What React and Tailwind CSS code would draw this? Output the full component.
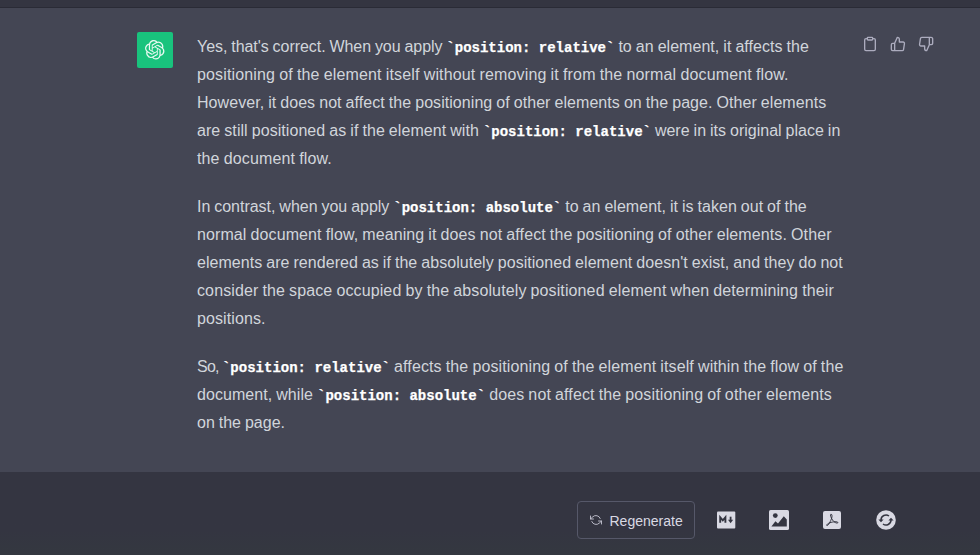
import React from "react";
import { FiClipboard, FiThumbsUp, FiThumbsDown, FiRefreshCcw } from "react-icons/fi";
import { SiOpenai } from "react-icons/si";

const Line = ({ children }) => <div className="whitespace-pre">{children}</div>;
const Code = ({ children }) => (
  <code className="font-['Liberation_Mono',monospace] text-sm font-bold text-white [word-spacing:0] [-webkit-text-stroke:0.25px_white]">{children}</code>
);

function MarkdownIcon() {
  return (
    <svg width="20" height="20" viewBox="0 0 20 20">
      <rect x="1" y="1.5" width="18.3" height="17" rx="1" fill="#d9d9e3" />
      <path d="M4.2 12.8V7.4L6.8 10.4L9.4 7.4V12.8" fill="none" stroke="#343541" strokeWidth="1.9" />
      <path d="M14.6 6.7V11" fill="none" stroke="#343541" strokeWidth="1.8" />
      <path d="M12 9.8H17.2L14.6 13.2Z" fill="#343541" />
    </svg>
  );
}

function ImageIcon() {
  return (
    <svg width="20" height="20" viewBox="0 0 20 20">
      <rect width="20" height="20" rx="1.6" fill="#d9d9e3" />
      <circle cx="6.3" cy="5.6" r="2.4" fill="#343541" />
      <path d="M2.4 16.6L6.4 11.2L9 13.4L14.8 6.2L17.8 9.4V16.6Z" fill="#343541" />
    </svg>
  );
}

function PdfIcon() {
  return (
    <svg width="20" height="20" viewBox="0 0 20 20">
      <rect x="1" y="1" width="18" height="18" rx="2" fill="#d9d9e3" />
      <path
        d="M8.9 4.2C10.2 4 10.2 6.3 9.7 8C8.7 11 6.4 15.6 5 15.6C3.8 15.3 5.8 13.4 8 12.7C10.8 11.8 15.8 11.2 15.9 12.6C15.7 13.9 12.2 12.6 10.5 10C8.9 7.6 8 4.6 8.9 4.2Z"
        fill="none"
        stroke="#343541"
        strokeWidth="1"
      />
    </svg>
  );
}

function SyncIcon() {
  return (
    <svg width="20" height="20" viewBox="0 0 20 20">
      <circle cx="10" cy="10" r="9.8" fill="#d9d9e3" />
      <path d="M5 10A5 5 0 0 1 13 6M15 10A5 5 0 0 1 7 14" fill="none" stroke="#343541" strokeWidth="1.5" />
      <path d="M2.4 9.4H7.6L5 12.2ZM17.6 10.6H12.4L15 7.8Z" fill="#343541" />
    </svg>
  );
}

export default function App() {
  return (
    <div className="flex h-[555px] w-[980px] flex-col overflow-hidden bg-[#343541] font-['Liberation_Sans',sans-serif]">
      <div className="h-2 shrink-0 border-b border-[#2a2b36]" />
      <main className="flex h-[464px] shrink-0 items-start bg-[#444654] pl-[137px] pt-6">
        <div className="flex size-9 shrink-0 items-center justify-center rounded-[2px] bg-[#19c37d] text-white/90">
          <SiOpenai size={19.5} />
        </div>
        <div className="ml-6 mt-px flex w-[665px] shrink-0 flex-col gap-5 text-base leading-7 text-[#d1d5db] [word-spacing:-0.5px]">
          <div>
            <Line>
              <span className="tracking-[-0.05px]">Yes, that's correct. When you apply </span>
              <Code>`position: relative`</Code>
              <span className="tracking-[0.04px]"> to an element, it affects the</span>
            </Line>
            <Line><span className="tracking-[0.149px]">positioning of the element itself without removing it from the normal document flow.</span></Line>
            <Line><span className="tracking-[0.056px]">However, it does not affect the positioning of other elements on the page. Other elements</span></Line>
            <Line>
              <span className="tracking-[0.06px]">are still positioned as if the element with </span>
              <Code>`position: relative`</Code>
              <span className="tracking-[0.01px]"> were in its original place in</span>
            </Line>
            <Line><span className="tracking-[0.14px]">the document flow.</span></Line>
          </div>
          <div>
            <Line>
              <span className="tracking-[-0.018px]">In contrast, when you apply </span>
              <Code>`position: absolute`</Code>
              <span className="tracking-[0.026px]"> to an element, it is taken out of the</span>
            </Line>
            <Line><span className="tracking-[0.101px]">normal document flow, meaning it does not affect the positioning of other elements. Other</span></Line>
            <Line><span className="tracking-[0.043px]">elements are rendered as if the absolutely positioned element doesn't exist, and they do not</span></Line>
            <Line><span className="tracking-[0.115px]">consider the space occupied by the absolutely positioned element when determining their</span></Line>
            <Line><span className="tracking-[0.1px]">positions.</span></Line>
          </div>
          <div>
            <Line>
              <span className="tracking-[-0.75px]">So, </span>
              <Code>`position: relative`</Code>
              <span className="tracking-[0.115px]"> affects the positioning of the element itself within the flow of the</span>
            </Line>
            <Line>
              <span className="tracking-[0.06px]">document, while </span>
              <Code>`position: absolute`</Code>
              <span className="tracking-[0.12px]"> does not affect the positioning of other elements</span>
            </Line>
            <Line>on the page.</Line>
          </div>
        </div>
        <div className="mt-1 flex gap-3 text-[#acacbe]">
          <FiClipboard size={16} />
          <FiThumbsUp size={16} />
          <FiThumbsDown size={16} />
        </div>
      </main>
      <footer className="flex flex-1 items-start bg-linear-to-b from-[#343541] from-70% to-[#343840] pl-[577px] pt-[29px]">
        <button className="flex h-[38px] w-[118px] shrink-0 items-center rounded border border-[#565869] pl-3 text-sm text-[#d9d9e3]">
          <FiRefreshCcw size={12} strokeWidth={1.8} className="mr-[7.5px] shrink-0 text-[#c5c5d2]" />
          <span className="pt-0.5">Regenerate</span>
        </button>
        <div className="ml-[21px] flex h-[38px] items-center gap-[33px]">
          <MarkdownIcon />
          <ImageIcon />
          <PdfIcon />
          <div className="pl-px"><SyncIcon /></div>
        </div>
      </footer>
    </div>
  );
}
